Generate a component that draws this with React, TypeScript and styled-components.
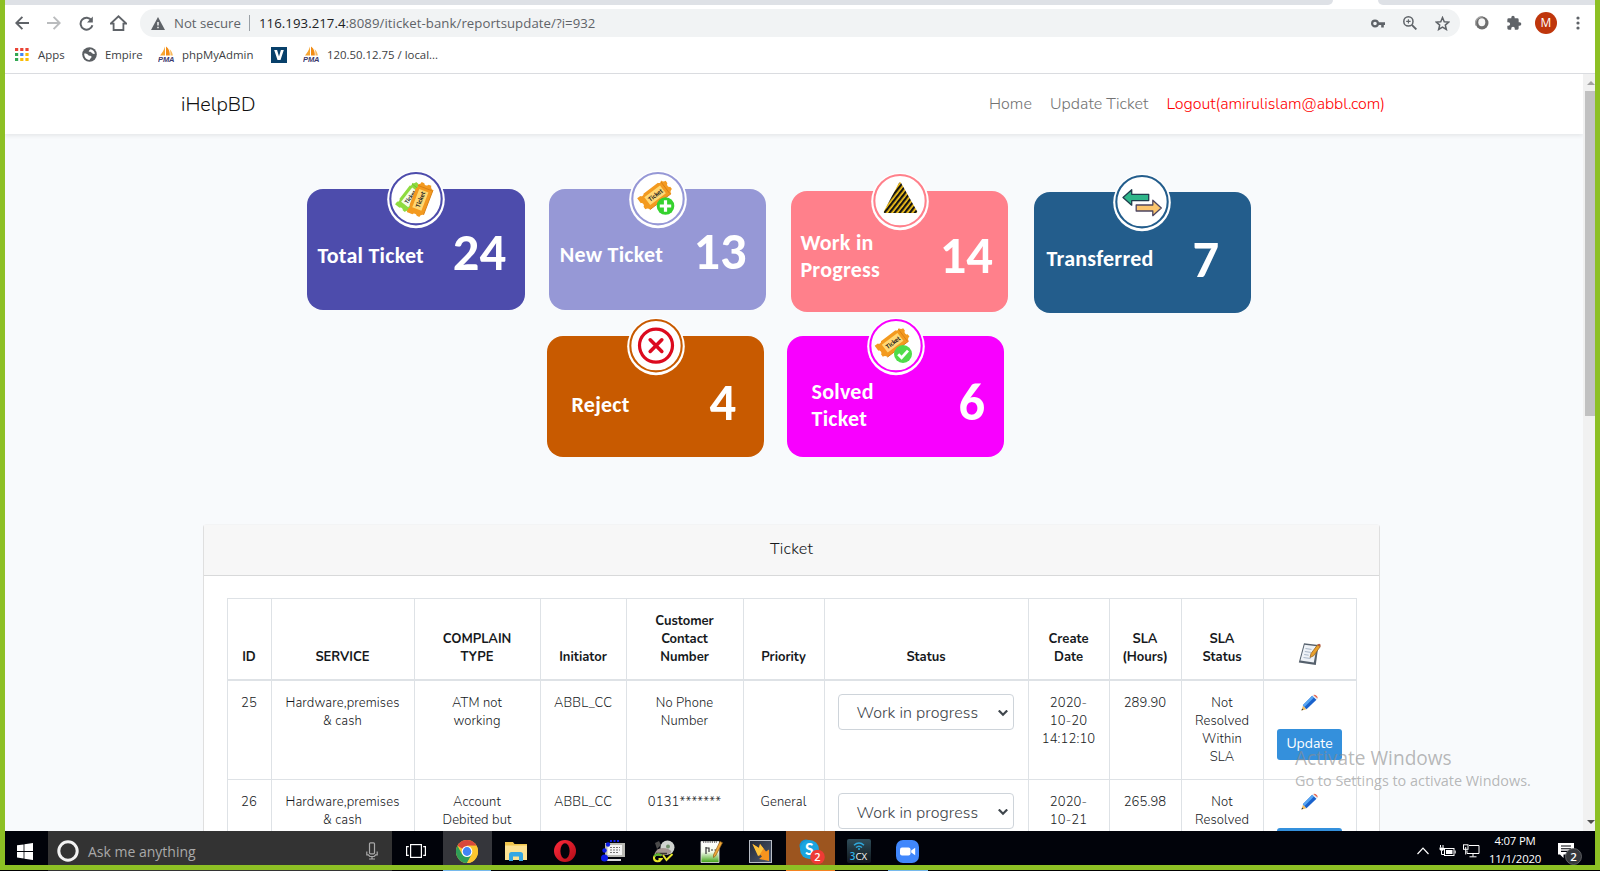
import React from 'react';
import styled, { createGlobalStyle } from 'styled-components';

const ui = '"Open Sans", "Noto Sans", sans-serif';
const web = 'Nunito, Lato, sans-serif';
const calibri = 'Carlito, Lato, sans-serif';

const GlobalStyle = createGlobalStyle`
  * { box-sizing: border-box; }
  body { margin: 0; background: #000; overflow: hidden; }
  svg { display: block; flex: none; }
`;

const Desktop = styled.div`
  position: relative;
  display: flex;
  flex-direction: column;
  width: 1600px;
  height: 871px;
  overflow: hidden;
`;
const Frame = styled.div`
  display: flex;
  flex-direction: column;
  height: 870px;
  border: solid #8dc024;
  border-width: 0 5px 5px;
  background: #fff;
`;

/* Browser chrome */
const TabStrip = styled.div`
  display: flex;
  justify-content: space-between;
  height: 5px;
  flex: none;
`;
const InactiveTab = styled.div<{ $width: number; $side: 'left' | 'right' }>`
  width: ${p => p.$width}px;
  background: #dee1e6;
  border-radius: ${p => (p.$side === 'left' ? '0 0 6px 0' : '0 0 0 6px')};
`;
const Toolbar = styled.div`
  display: flex;
  align-items: center;
  height: 36px;
  flex: none;
  padding-left: 1px;
`;
const IconSlot = styled.div`
  display: flex;
  align-items: center;
  justify-content: center;
  width: 32px;
  height: 28px;
  flex: none;
`;
const AddressBar = styled.div`
  display: flex;
  align-items: center;
  width: 1320px;
  height: 28px;
  margin: 0 6px;
  padding: 0 2px 0 11px;
  border-radius: 14px;
  background: #f1f3f4;
  font: 13.2px/28px ${ui};
  color: #5f6368;
`;
const Security = styled.span`
  width: 75px;
  margin-left: 9px;
`;
const Divider = styled.span`
  width: 1px;
  height: 16px;
  margin-right: 9px;
  background: #9aa0a6;
`;
const Url = styled.span`
  flex: 1;
  letter-spacing: 0.06px;
  b { font-weight: 400; color: #202124; }
`;
const Avatar = styled.div`
  width: 22px;
  height: 22px;
  border-radius: 50%;
  background: #bf360c;
  color: #fff;
  font: 12px/22px ${ui};
  text-align: center;
`;
const Bookmarks = styled.div`
  display: flex;
  align-items: center;
  height: 33px;
  flex: none;
  padding: 0 0 5px 10px;
  border-bottom: 1px solid #dadce0;
`;
const Bookmark = styled.div<{ $width: number }>`
  display: flex;
  align-items: center;
  width: ${p => p.$width}px;
  font: 11.4px/28px ${ui};
  color: #3c4043;
  white-space: nowrap;
`;
const Favicon = styled.span<{ $wide?: boolean }>`
  width: ${p => (p.$wide ? 24 : 23)}px;
  flex: none;
`;

/* Web page */
const Viewport = styled.div`
  display: flex;
  flex: 1;
  min-height: 0;
`;
const Page = styled.main`
  width: 1578px;
  overflow: hidden;
  background: #f8fafc;
  font-family: ${web};
  font-weight: 300;
  color: #16191c;
`;
const Scrollbar = styled.div`
  display: flex;
  flex-direction: column;
  align-items: flex-end;
  justify-content: space-between;
  width: 12px;
  padding: 7px 0 7px;
  background: #f1f1f1;
`;
const Thumb = styled.div`
  width: 10px;
  height: 325px;
  margin: 6px 0 auto;
  background: #c1c1c1;
`;
const Navbar = styled.nav`
  display: flex;
  align-items: center;
  height: 60px;
  padding: 0 198px 0 176px;
  background: #fff;
  box-shadow: 0 2px 4px rgba(0, 0, 0, 0.075);
`;
const Brand = styled.span`
  margin-right: auto;
  font-size: 19.8px;
  color: #111;
`;
const NavLink = styled.a<{ $danger?: boolean }>`
  margin-left: 18px;
  font-size: 16px;
  letter-spacing: ${p => (p.$danger ? -0.06 : 0.04)}px;
  color: ${p => (p.$danger ? '#ff0000' : '#737373')};
`;

/* Summary tiles */
const TileRow = styled.section<{ $top: number; $left: number; $gap: number }>`
  display: flex;
  align-items: flex-start;
  gap: ${p => p.$gap}px;
  margin-top: ${p => p.$top}px;
  padding-left: ${p => p.$left}px;
`;
const TileBox = styled.article<{ $color: string; $drop: number; $width: number }>`
  position: relative;
  display: flex;
  align-items: flex-start;
  justify-content: space-between;
  width: ${p => p.$width}px;
  height: 121px;
  margin: ${p => p.$drop}px ${p => 217 - p.$width}px 0 0;
  border-radius: 16px;
  background: ${p => p.$color};
  color: #fff;
  font-family: ${calibri};
  font-weight: 700;
`;
const TileLabel = styled.div<{ $top: number; $left: number }>`
  margin: ${p => p.$top}px 0 0 ${p => p.$left}px;
  font-size: 22px;
  line-height: 26.7px;
  letter-spacing: 0.25px;
  white-space: pre-line;
`;
const TileNumber = styled.div<{ $top: number; $right: number }>`
  margin: ${p => p.$top}px ${p => p.$right}px 0 0;
  font-size: 52.5px;
  line-height: 52px;
`;
const TileBadge = styled.div`
  position: absolute;
  left: 50%;
  top: -20px;
  transform: translateX(-50%);
`;

/* Ticket panel */
const Panel = styled.section`
  width: 1177px;
  margin: 67px 0 0 198px;
  border: 1px solid #dfdfdf;
  border-top-color: #f3f4f5;
  border-radius: 4px;
  background: #fff;
`;
const PanelTitle = styled.h2`
  height: 51px;
  margin: 0;
  border-bottom: 1px solid #d8d9da;
  background: #f7f7f7;
  font-size: 16px;
  font-weight: 300;
  letter-spacing: 0.2px;
  line-height: 48px;
  text-align: center;
`;
const Table = styled.table`
  width: 1130px;
  margin: 22px 0 0 23px;
  border-collapse: collapse;
  table-layout: fixed;
  font-size: 13px;
  line-height: 18px;
  text-align: center;
`;
const HeadCell = styled.th`
  height: 81px;
  padding: 0 9px 13px 8px;
  vertical-align: bottom;
  border: 1px solid #dee2e6;
  border-bottom-width: 2px;
  font-weight: 700;
  white-space: pre-line;
`;
const Cell = styled.td`
  height: 100px;
  padding: 13px 1px 0 0;
  vertical-align: top;
  border: 1px solid #dee2e6;
  letter-spacing: 0.12px;
  white-space: pre-line;
`;
const StatusSelect = styled.div`
  display: flex;
  align-items: center;
  justify-content: space-between;
  width: 176px;
  height: 36px;
  margin: 0 auto;
  padding: 3px 5px 0 17.5px;
  border: 1px solid #ced4da;
  border-radius: 4px;
  font-size: 16px;
  letter-spacing: 0.05px;
  color: #3c4349;
`;
const Actions = styled.div`
  display: flex;
  flex-direction: column;
  align-items: center;
  gap: 18px;
`;
const UpdateButton = styled.button`
  width: 65px;
  height: 31px;
  padding: 0 0 2px;
  border: 0;
  border-radius: 3px;
  background: #3490dc;
  color: #fff;
  font: 14px ${web};
`;
const HeadIcon = styled.span`
  display: flex;
  justify-content: center;
`;

/* Windows shell */
const Watermark = styled.div`
  position: absolute;
  left: 1295px;
  top: 745px;
  color: rgba(140, 140, 140, 0.62);
  font: 14.4px/17px ${ui};
  white-space: nowrap;
  strong { display: block; font-size: 19.1px; line-height: 27px; font-weight: 400; }
`;
const Taskbar = styled.footer`
  display: flex;
  height: 34px;
  flex: none;
  overflow: hidden;
  background: #01030a;
`;
const TaskSlot = styled.div<{ $width?: number; $bg?: string; $shift?: number; $drop?: number }>`
  display: flex;
  align-items: center;
  justify-content: center;
  width: ${p => p.$width ?? 49}px;
  height: 40px;
  flex: none;
  padding: ${p => p.$drop ?? 0}px ${p => p.$shift ?? 0}px 0 0;
  background: ${p => p.$bg ?? 'transparent'};
`;
const SearchBox = styled.div`
  display: flex;
  align-items: center;
  width: 344px;
  height: 40px;
  padding: 0 14px 0 9px;
  background: #333;
  font: 14px/40px ${ui};
  color: #a9a9a9;
  span { flex: 1; margin: 1px 0 0 9px; }
`;
const Tray = styled.div`
  display: flex;
  margin-left: auto;
`;
const Clock = styled.div`
  width: 64px;
  padding-top: 1px;
  font: 11.4px/18px ${ui};
  letter-spacing: -0.2px;
  color: #fff;
  text-align: center;
`;
const Underline = styled.div`
  display: flex;
  height: 1px;
  padding-left: 48px;
  background: #000;
`;
const Segment = styled.span<{ $width: number; $color: string }>`
  width: ${p => p.$width}px;
  background: ${p => p.$color};
`;

const grey = '#5f6368';

const Arrow = ({ flip, color }: { flip?: boolean; color: string }) => (
  <svg width="14" height="14" viewBox="0 0 14 14" fill="none" stroke={color} strokeWidth="1.9" transform={flip ? 'scale(-1 1)' : undefined}>
    <path d="M14 7H1.5M7.4 .8 1.3 7l6.1 6.2" />
  </svg>
);
const Reload = () => (
  <svg width="15" height="15" viewBox="0 0 15 15">
    <path d="M12.600 4.400A6 6 0 1 0 13.400 9.200" fill="none" stroke={grey} strokeWidth="2" />
    <path d="M13.800 .6v6H8z" fill={grey} />
  </svg>
);
const HomeIcon = () => (
  <svg width="17" height="16" viewBox="0 0 17 16" fill="none" stroke={grey} strokeWidth="1.8">
    <path d="M.8 8.600H3.600V15h9.800V8.600h2.800L8.500 1.300z" />
  </svg>
);
const Warning = () => (
  <svg width="14" height="13" viewBox="0 0 14 13">
    <path d="M7 0l7 13H0z" fill={grey} />
    <path d="M6.300 5h1.400v3.600H6.300zM6.300 9.700h1.400v1.500H6.300z" fill="#fff" />
  </svg>
);
const KeyIcon = () => (
  <svg width="14" height="9" viewBox="0 0 14 9">
    <circle cx="4" cy="4.500" r="2.900" fill="none" stroke={grey} strokeWidth="2.200" />
    <path d="M6.500 3.200H14v2.700h-1.200v2.500h-2.600V5.900H6.500z" fill={grey} />
  </svg>
);
const ZoomIcon = () => (
  <svg width="14" height="14" viewBox="0 0 14 14" fill="none" stroke={grey}>
    <circle cx="5.400" cy="5.400" r="4.600" strokeWidth="1.500" />
    <path d="M8.800 8.800l4.600 4.600" strokeWidth="1.900" />
    <path d="M3.200 5.400h4.400M5.400 3.200v4.400" strokeWidth="1.100" />
  </svg>
);
const Star = () => (
  <svg width="15" height="15" viewBox="0 0 24 24" fill="none" stroke={grey} strokeWidth="2.400">
    <path d="M12 2.500l2.800 6.700 7.200.6-5.500 4.700 1.700 7.100-6.200-3.800-6.200 3.800 1.700-7.100L2 9.800l7.200-.6z" />
  </svg>
);
const Ball = () => (
  <svg width="14" height="14" viewBox="0 0 14 14">
    <circle cx="7" cy="7" r="6.500" fill="#6d6d6d" />
    <path d="M1 9.500A6.400 6.400 0 0 1 8 .8" stroke="#a5a5a5" strokeWidth="1.400" fill="none" />
    <ellipse cx="6.800" cy="6.200" rx="3.500" ry="4" fill="#f6f6f6" />
  </svg>
);
const Puzzle = () => (
  <svg width="16" height="16" viewBox="0 0 24 24" fill={grey}>
    <path d="M20.500 11H19V7a2 2 0 0 0-2-2h-4V3.500a2.500 2.500 0 0 0-5 0V5H4a2 2 0 0 0-2 2v3.800h1.500a2.700 2.700 0 0 1 0 5.400H2V20a2 2 0 0 0 2 2h3.800v-1.500a2.700 2.700 0 0 1 5.400 0V22H17a2 2 0 0 0 2-2v-4h1.500a2.500 2.500 0 0 0 0-5z" />
  </svg>
);
const Dots = () => (
  <svg width="4" height="14" viewBox="0 0 4 14" fill={grey}>
    <circle cx="2" cy="2" r="1.600" /><circle cx="2" cy="7" r="1.600" /><circle cx="2" cy="12" r="1.600" />
  </svg>
);
const AppsGrid = () => {
  const colors = ['#ea4335', '#ea4335', '#ea4335', '#34a853', '#4285f4', '#fbbc05', '#34a853', '#fbbc05', '#fbbc05'];
  return (
    <svg width="14" height="13" viewBox="0 0 14 13">
      {colors.map((c, i) => <rect key={i} x={(i % 3) * 5.2} y={Math.floor(i / 3) * 5} width="3.200" height="3" fill={c} />)}
    </svg>
  );
};
const Globe = () => (
  <svg width="15" height="15" viewBox="0 0 15 15">
    <circle cx="7.500" cy="7.500" r="7.300" fill="#5b5f63" />
    <path d="M8.300 2.200c2.600.3 4.300 2.100 4.500 4.600-1.400.5-2.600-.2-3.400-1.200-.9-1.100-2.900.2-2.600-1.500.1-.8 1-1 1.500-1.900zM2.200 6.600c1.700-.2 3.400.5 4.400 1.800 1.200.3 2.500.1 3.100 1.300-.2 1.300-1.500 1.700-2.200 3.200-3.100.2-5.500-2.800-5.300-6.300z" fill="#fff" />
  </svg>
);
const Pma = () => (
  <svg width="17" height="17" viewBox="0 0 17 17">
    <path d="M7 .5v9H2C4 7 6 4 7 .5z" fill="#f7a531" />
    <path d="M8 .5c3 2 4 5.500 3.800 9H8z" fill="#f28c14" />
    <path d="M11.500 3c2 1.700 3 4 3.400 6.500h-2.500c.1-2.500 0-4.500-.9-6.500z" fill="#f9b95c" />
    <text x="0" y="16.400" fontFamily="Liberation Sans, sans-serif" fontSize="7.500" fontWeight="700" fontStyle="italic" fill="#3c3a6e" textLength="16.500">PMA</text>
  </svg>
);
const VIcon = () => (
  <svg width="16" height="16" viewBox="0 0 16 16">
    <rect width="16" height="16" fill="#08406a" />
    <path d="M3.200 3h2.900L8 9.600 9.900 3h2.900L9.500 13h-3z" fill="#fff" />
  </svg>
);

const TicketShape = ({ green, size = 1 }: { green?: boolean; size?: number }) => (
  <g transform={`scale(${size})`}>
    <path d="M-17-8.500h4c.3 1.600 3.700 1.600 4 0H9.500c.3 1.600 3.700 1.600 4 0 .3 2 1.500 3 3.500 3.200v3c-2 .4-2 4.200 0 4.600v3c-2 .2-3.200 1.200-3.500 3.200h-27c-.3-2-1.500-3-3.500-3.200v-3c2-.4 2-4.200 0-4.600z" fill={green ? '#8edb3f' : '#f39a1f'} />
    <path d="M-13.500 8.500h27M12.500-7.500v15" fill="none" stroke={green ? '#6fbf2a' : '#d97f12'} strokeWidth=".9" />
    <rect x="-10.500" y="-5" width="20" height="10" fill={green ? '#f4fbe9' : '#ffd873'} />
    <text y="2.200" textAnchor="middle" fontFamily="Carlito, Lato, sans-serif" fontWeight="700" fontSize="6.800" fill="#222">Ticket</text>
  </g>
);

type Glyph = 'total' | 'new' | 'progress' | 'transfer' | 'reject' | 'solved';
const BadgeArt = ({ glyph, color }: { glyph: Glyph; color: string }) => (
  <svg width="60" height="62" viewBox="0 0 60 62">
    <circle cx="30" cy="30.500" r="28.800" fill="#fff" />
    <circle cx="30" cy="29.700" r="25.700" fill="#fff" stroke={color} strokeWidth="2.100" />
    {glyph === 'total' && (
      <>
        <g transform="translate(24.500 28) rotate(-52)"><TicketShape green size={0.9} /></g>
        <g transform="translate(34.500 30.500) rotate(-69)"><TicketShape size={0.98} /></g>
      </>
    )}
    {glyph === 'new' && (
      <>
        <g transform="translate(27.500 26) rotate(-37)"><TicketShape size={0.98} /></g>
        <circle cx="37.500" cy="37" r="8.800" fill="#35d22f" />
        <path d="M37.500 31.300v11.400M31.800 37h11.400" stroke="#fff" strokeWidth="3.200" />
      </>
    )}
    {glyph === 'solved' && (
      <>
        <g transform="translate(27 26.500) rotate(-37)"><TicketShape size={0.98} /></g>
        <circle cx="37" cy="38" r="9" fill="#4fdc4a" />
        <path d="M32.200 38.200l3.400 3.600 6.400-7.200" stroke="#fff" strokeWidth="2.800" fill="none" />
      </>
    )}
    {glyph === 'progress' && (
      <>
        <defs>
          <pattern id="hazard" width="4" height="4" patternUnits="userSpaceOnUse" patternTransform="rotate(38)">
            <rect width="4" height="4" fill="#fdc91a" />
            <rect width="2.300" height="4" fill="#141414" />
          </pattern>
        </defs>
        <path d="M30 12.500L15 40.800h31z" fill="url(#hazard)" stroke="url(#hazard)" strokeWidth="2.500" strokeLinejoin="round" />
      </>
    )}
    {glyph === 'transfer' && (
      <g strokeWidth="1.300" strokeLinejoin="round">
        <path d="M11 25.500l8.700-7.700v4.500h17v6.300h-17v4.600z" fill="#2fb68a" stroke="#1e3d4c" />
        <path d="M49.300 36l-8.500-7.800v4.800H24.200v6h16.600v4.700z" fill="#fbc56d" stroke="#4d4560" />
      </g>
    )}
    {glyph === 'reject' && (
      <g fill="none" stroke="#dc0a1e">
        <circle cx="30" cy="29.600" r="16.500" strokeWidth="3.200" />
        <path d="M24.200 23.800l11.600 11.600M35.800 23.800L24.200 35.400" strokeWidth="3.600" strokeLinecap="round" />
      </g>
    )}
  </svg>
);

const Notepad = () => (
  <svg width="23" height="24" viewBox="0 0 23 24">
    <path d="M6 1.200L20.500 3 17.800 23 .8 20.500z" fill="#55606c" />
    <path d="M6.600 2.800L18.800 4.300 15.800 20.600 2.400 18.600z" fill="#eef2f7" />
    <path d="M7.500 6.500l6 .9M6.800 9.500l6 .9M6.200 12.500l4.500.7M5.500 15.500l7 1" stroke="#a9b7c8" strokeWidth="1" />
    <path d="M12 15.500l1-4L19.500 2.800l2.800 1.800-6.600 9.200z" fill="#e9a02c" stroke="#8a5a1c" strokeWidth=".7" />
    <path d="M19.500 2.800l2.800 1.800 .4-1.800-1.600-1z" fill="#b04a33" />
  </svg>
);
const Pencil = () => (
  <svg width="17" height="17" viewBox="0 0 17 17">
    <path d="M.5 16.500L2 11.500l3.500 3.700z" fill="#f0bd62" />
    <path d="M.5 16.500l.6-2 1.300 1.300z" fill="#333" />
    <path d="M1.800 11.300L11.200 1.800l4.300 3.900L5.500 15.200z" fill="#1a62cc" />
    <path d="M1.800 11.300L11.200 1.800l1.800 1.600-9.500 9.500z" fill="#57a5f2" />
    <path d="M11.500 2l1-.9 4 3.500-1 1.100z" fill="#dfe5ea" />
    <path d="M12.500 1.100c1-1.300 5 1.800 4 3.500z" fill="#e8573c" />
  </svg>
);
const Chevron = () => (
  <svg width="10" height="7" viewBox="0 0 10 7" fill="none" stroke="#3f464c" strokeWidth="2.200">
    <path d="M.8 .5l4.200 4.200L9.200 .5" />
  </svg>
);
const Caret = ({ up }: { up?: boolean }) => (
  <svg width="8" height="4" viewBox="0 0 8 4">
    <path d={up ? 'M0 4l4-4 4 4z' : 'M0 0l4 4 4-4z'} fill={up ? '#a3a3a3' : '#505050'} />
  </svg>
);

const WindowsLogo = () => (
  <svg width="16" height="17" viewBox="0 0 16 17" fill="#fff">
    <path d="M0 2.300l6.600-.9v6.600H0zM7.400 1.300L16 0v8H7.400zM0 8.900h6.600v6.600L0 14.600zM7.400 8.900H16V17l-8.600-1.300z" />
  </svg>
);
const Cortana = () => (
  <svg width="22" height="22" viewBox="0 0 22 22">
    <circle cx="11" cy="11" r="9.200" fill="none" stroke="#f2f2f2" strokeWidth="3" />
  </svg>
);
const Mic = () => (
  <svg width="12" height="18" viewBox="0 0 12 18" fill="none" stroke="#a9a9a9" strokeWidth="1.200">
    <rect x="3.500" y=".8" width="5" height="11" rx="1" />
    <path d="M.8 9.500v3.300h1.500l1.500 1.700h4.400l1.500-1.700h1.500V9.500M6 14.500V17M3 17h6" />
  </svg>
);
const TaskView = () => (
  <svg width="20" height="14" viewBox="0 0 20 14" fill="none" stroke="#fff" strokeWidth="1.200">
    <rect x="4.600" y=".6" width="10.800" height="12.800" />
    <path d="M2.800 2.600H.6v8.800h2.200M17.200 2.600h2.200v8.800h-2.200" />
  </svg>
);
const Chrome = () => (
  <svg width="22" height="23" viewBox="0 0 24 24" preserveAspectRatio="none">
    <circle cx="12" cy="12" r="12" fill="#fbc62f" />
    <path d="M12 12L1.600 6A12 12 0 0 1 22.400 6H12z" fill="#d9483b" />
    <path d="M1.600 6A12 12 0 0 0 12 24l5.200-9L12 12 6.800 15z" fill="#2f9e57" />
    <path d="M22.400 6A12 12 0 0 1 12 24l5.200-9a6 6 0 0 0 0-6L12 6z" fill="#fbc62f" />
    <circle cx="12" cy="12" r="5.800" fill="#fff" />
    <circle cx="12" cy="12" r="4.600" fill="#4285f4" />
  </svg>
);
const Folder = () => (
  <svg width="22" height="19" viewBox="0 0 22 19">
    <path d="M0 0h8l1.500 2H22v16H0z" fill="#f0c54d" />
    <path d="M0 3.500h22V18H0z" fill="#fde293" />
    <path d="M4 19v-6.500Q4 10 6.500 10h9q2.500 0 2.500 2.500V19h-4v-4.500H8V19z" fill="#35a7e3" />
  </svg>
);
const Opera = () => (
  <svg width="22" height="22" viewBox="0 0 22 22">
    <defs><linearGradient id="op" x2="1" y2="1"><stop stopColor="#ff2a3c" /><stop offset="1" stopColor="#b00d16" /></linearGradient></defs>
    <circle cx="11" cy="11" r="11" fill="url(#op)" />
    <ellipse cx="11" cy="11" rx="4.600" ry="7.800" fill="#01030a" />
  </svg>
);
const Terminal = () => (
  <svg width="24" height="22" viewBox="0 0 24 22">
    <path d="M4 3h20V17H4z" fill="#b9b9b4" />
    <path d="M6.500 5h14.500v10H6.500z" fill="#f5f5f5" />
    <path d="M9 7.500h10M9 10h10M9 12.500h8" stroke="#777" strokeWidth="1" strokeDasharray="2 1" />
    <path d="M3 19h17v2H3z" fill="#d8d8d8" />
    <path d="M9 1h10" stroke="#0b1be8" strokeWidth="2" strokeDasharray="2 1.500" />
    <circle cx="7" cy="4.500" r="2.200" fill="#0b1be8" /><circle cx="3.500" cy="10.500" r="2.200" fill="#0b1be8" /><circle cx="3.500" cy="18" r="3.500" fill="#0b1be8" />
  </svg>
);
const DiscTool = () => (
  <svg width="23" height="23" viewBox="0 0 23 23">
    <circle cx="15.500" cy="7.500" r="7" fill="#cfd3cf" />
    <circle cx="16" cy="6.500" r="2" fill="#6f8f6a" />
    <path d="M3 3l4-2 2 4-4 4z" fill="#4b4b4b" />
    <path d="M2.500 14q2-6 8-6 7 0 9 4l-4 3z" fill="#a39691" />
    <path d="M4 13.500h11" stroke="#3a3432" strokeWidth="1.500" />
    <path d="M9.500 15.500c-4-2.500-8 0-7.500 3s5.500 4 7.500.5H6.500M11 15l3.500 5 6-6" fill="none" stroke="#e6e62a" strokeWidth="2" />
    <path d="M9.500 15.500c-3-2-6-.8-7 1" fill="none" stroke="#57b33a" strokeWidth="2" />
  </svg>
);
const NotepadPlus = () => (
  <svg width="24" height="23" viewBox="0 0 24 23">
    <defs><linearGradient id="np" x2="0" y2="1"><stop stopColor="#fff" /><stop offset=".5" stopColor="#f4fbec" /><stop offset="1" stopColor="#3fa312" /></linearGradient></defs>
    <path d="M1 1.500h18V22.500H1z" fill="url(#np)" stroke="#e4e8e0" strokeWidth=".8" />
    <path d="M3 2h14" stroke="#555" strokeWidth="1.300" strokeDasharray="1.200 1" />
    <path d="M6 7v7M6 8h3v4M11 10h2M14.500 10h1.500" stroke="#333" strokeWidth="1.200" fill="none" />
    <path d="M13.500 15l6.500-13.500 2.500 1.200-7 13.300-2 1.500z" fill="#f0a93a" stroke="#8c5b12" strokeWidth=".7" />
  </svg>
);
const Bolt = () => (
  <svg width="23" height="23" viewBox="0 0 23 23">
    <defs><linearGradient id="bz" x2="1" y2="1"><stop stopColor="#202734" /><stop offset="1" stopColor="#4e5a70" /></linearGradient></defs>
    <rect x=".5" y=".5" width="22" height="22" fill="url(#bz)" stroke="#b9bec6" />
    <path d="M3.500 4l6.500 4 1-4 6 7.500 3-2V21l-10-2 3-2.500-2-2-1 2z" fill="#f7941e" />
    <path d="M3.500 4l6.500 4 1-4 3.500 4.500-4 6.500-1.500 1z" fill="#fdc33c" />
  </svg>
);
const Skype = () => (
  <svg width="28" height="28" viewBox="0 0 28 28">
    <circle cx="9" cy="9" r="6.500" fill="#1594d2" /><circle cx="15.500" cy="16" r="6.500" fill="#1594d2" />
    <circle cx="12.500" cy="12.500" r="9.500" fill="#1aa5e0" />
    <text x="12.200" y="18.300" textAnchor="middle" fontFamily="Carlito, Lato, sans-serif" fontSize="18" fontWeight="700" fill="#fff">S</text>
    <circle cx="20.500" cy="20" r="7.300" fill="#ee3b35" />
    <text x="20.500" y="24" textAnchor="middle" fontFamily="Open Sans, sans-serif" fontSize="11" fontWeight="600" fill="#fff">2</text>
  </svg>
);
const ThreeCx = () => (
  <svg width="24" height="24" viewBox="0 0 24 24">
    <defs><linearGradient id="cx" x2="0" y2="1"><stop stopColor="#2f4d5a" /><stop offset="1" stopColor="#10171c" /></linearGradient></defs>
    <rect width="24" height="24" rx="2" fill="url(#cx)" />
    <path d="M7 6.200q5-4.500 10 0M9 8.500q3-2.600 6 0" fill="none" stroke="#2fa8dc" strokeWidth="1.500" />
    <circle cx="12" cy="10" r="1" fill="#2fa8dc" />
    <text x="2.800" y="20.500" fontFamily="Open Sans, sans-serif" fontSize="9.800" fill="#2fb4ea" fontWeight="600">3<tspan fill="#f4f4f4" fontWeight="400">CX</tspan></text>
  </svg>
);
const ZoomApp = () => (
  <svg width="23" height="23" viewBox="0 0 23 23">
    <rect width="23" height="23" rx="7" fill="#4087fc" />
    <rect x="4" y="7.500" width="10.500" height="8" rx="2" fill="#fff" />
    <path d="M15.200 10.500l4-2.700v7.400l-4-2.700z" fill="#fff" />
  </svg>
);
const TrayChevron = () => (
  <svg width="12" height="8" viewBox="0 0 12 8" fill="none" stroke="#fff" strokeWidth="1.200"><path d="M.5 7L6 1.200 11.500 7" /></svg>
);
const Battery = () => (
  <svg width="17" height="12" viewBox="0 0 17 12" fill="none" stroke="#fff">
    <rect x="5.500" y="3.500" width="9.500" height="7" /><rect x="7" y="5" width="6.500" height="4" fill="#fff" stroke="none" />
    <path d="M16.200 5.500v3M2.500 5.500V9.500H5M1.500 0v2.500M4 0v2.500" /><path d="M.5 2.500h4.500v2L3.800 5.800h-2L.5 4.500z" fill="#fff" stroke="none" />
  </svg>
);
const Network = () => (
  <svg width="17" height="14" viewBox="0 0 17 14" fill="none" stroke="#fff">
    <path d="M6 1.500h10v8H4V6.500M10 9.500v3M6.500 12.800h7" /><rect x=".5" y=".8" width="4.500" height="4.500" /><path d="M2.700 3v7.500" />
  </svg>
);
const Notifications = () => (
  <svg width="27" height="24" viewBox="0 0 27 24">
    <path d="M0 1h16v11.500H5.500v3.500L2 12.500H0z" fill="#fff" />
    <path d="M3 4h10M3 6.700h10M3 9.400h7" stroke="#01030a" strokeWidth="1.100" />
    <circle cx="15.500" cy="14.500" r="8" fill="#35373b" stroke="#6b6d71" strokeWidth=".8" />
    <text x="15.500" y="18.700" textAnchor="middle" fontFamily="Open Sans, sans-serif" fontSize="11.500" fontWeight="600" fill="#fff">2</text>
  </svg>
);

type TileProps = {
  label: string; value: number; color: string; glyph: Glyph; drop?: number; width?: number;
  labelAt: [number, number]; valueAt: [number, number];
};
const Tile = ({ label, value, color, glyph, drop = 0, width = 217, labelAt, valueAt }: TileProps) => (
  <TileBox $color={color} $drop={drop} $width={width}>
    <TileBadge><BadgeArt glyph={glyph} color={color} /></TileBadge>
    <TileLabel $top={labelAt[0]} $left={labelAt[1]}>{label}</TileLabel>
    <TileNumber $top={valueAt[0]} $right={valueAt[1]}>{value}</TileNumber>
  </TileBox>
);

const columns: [string, number][] = [
  ['ID', 44], ['SERVICE', 143], ['COMPLAIN\nTYPE', 126], ['Initiator', 86], ['Customer\nContact\nNumber', 117],
  ['Priority', 81], ['Status', 204], ['Create\nDate', 81], ['SLA\n(Hours)', 72], ['SLA\nStatus', 82],
];
const tickets = [
  { id: 25, service: 'Hardware,premises\n& cash', type: 'ATM not\nworking', by: 'ABBL_CC', phone: 'No Phone\nNumber', priority: '', created: '2020-\n10-20\n14:12:10', sla: '289.90', slaStatus: 'Not\nResolved\nWithin\nSLA' },
  { id: 26, service: 'Hardware,premises\n& cash', type: 'Account\nDebited but', by: 'ABBL_CC', phone: '0131*******', priority: 'General', created: '2020-\n10-21', sla: '265.98', slaStatus: 'Not\nResolved' },
];

export default function App() {
  return (
    <Desktop>
      <GlobalStyle />
      <Frame>
        <TabStrip>
          <InactiveTab $width={1328} $side="left" />
          <InactiveTab $width={217} $side="right" />
        </TabStrip>
        <Toolbar>
          <IconSlot><Arrow color={grey} /></IconSlot>
          <IconSlot><Arrow flip color="#babcbe" /></IconSlot>
          <IconSlot><Reload /></IconSlot>
          <IconSlot><HomeIcon /></IconSlot>
          <AddressBar>
            <Warning />
            <Security>Not secure</Security>
            <Divider />
            <Url><b>116.193.217.4</b>:8089/iticket-bank/reportsupdate/?i=932</Url>
            <IconSlot><KeyIcon /></IconSlot>
            <IconSlot><ZoomIcon /></IconSlot>
            <IconSlot><Star /></IconSlot>
          </AddressBar>
          <IconSlot><Ball /></IconSlot>
          <IconSlot><Puzzle /></IconSlot>
          <IconSlot><Avatar>M</Avatar></IconSlot>
          <IconSlot><Dots /></IconSlot>
        </Toolbar>
        <Bookmarks>
          <Bookmark $width={67}><Favicon><AppsGrid /></Favicon>Apps</Bookmark>
          <Bookmark $width={76}><Favicon><Globe /></Favicon>Empire</Bookmark>
          <Bookmark $width={113}><Favicon $wide><Pma /></Favicon>phpMyAdmin</Bookmark>
          <Bookmark $width={32}><Favicon><VIcon /></Favicon></Bookmark>
          <Bookmark $width={160}><Favicon $wide><Pma /></Favicon>120.50.12.75 / local...</Bookmark>
        </Bookmarks>

        <Viewport>
          <Page>
            <Navbar>
              <Brand>iHelpBD</Brand>
              <NavLink>Home</NavLink>
              <NavLink>Update Ticket</NavLink>
              <NavLink $danger>Logout(amirulislam@abbl.com)</NavLink>
            </Navbar>

            <TileRow $top={55} $left={302} $gap={25.2}>
              <Tile label="Total Ticket" value={24} color="#4d4cac" glyph="total" width={218} labelAt={[54, 10.5]} valueAt={[36.5, 19]} />
              <Tile label="New Ticket" value={13} color="#9698d6" glyph="new" labelAt={[53, 10.5]} valueAt={[35.5, 19.5]} />
              <Tile label={'Work in\nProgress'} value={14} color="#ff808b" glyph="progress" drop={2} labelAt={[39, 9]} valueAt={[38, 15.5]} />
              <Tile label="Transferred" value={7} color="#235d8c" glyph="transfer" drop={3} labelAt={[54, 13]} valueAt={[40.5, 31.5]} />
            </TileRow>
            <TileRow $top={23} $left={542} $gap={23}>
              <Tile label="Reject" value={4} color="#c85a00" glyph="reject" labelAt={[56, 24.5]} valueAt={[39.5, 28]} />
              <Tile label={'Solved\nTicket'} value={6} color="#f800ff" glyph="solved" labelAt={[43, 24.5]} valueAt={[40, 19]} />
            </TileRow>

            <Panel>
              <PanelTitle>Ticket</PanelTitle>
              <Table>
                <colgroup>
                  {columns.map(([name, w]) => <col key={name} width={w} />)}
                  <col width={93} />
                </colgroup>
                <thead>
                  <tr>
                    {columns.map(([name]) => <HeadCell key={name}>{name}</HeadCell>)}
                    <HeadCell><HeadIcon><Notepad /></HeadIcon></HeadCell>
                  </tr>
                </thead>
                <tbody>
                  {tickets.map(t => (
                    <tr key={t.id}>
                      <Cell>{t.id}</Cell>
                      <Cell>{t.service}</Cell>
                      <Cell>{t.type}</Cell>
                      <Cell>{t.by}</Cell>
                      <Cell>{t.phone}</Cell>
                      <Cell>{t.priority}</Cell>
                      <Cell><StatusSelect>Work in progress<Chevron /></StatusSelect></Cell>
                      <Cell>{t.created}</Cell>
                      <Cell>{t.sla}</Cell>
                      <Cell>{t.slaStatus}</Cell>
                      <Cell><Actions><Pencil /><UpdateButton>{t.id === 25 ? 'Update' : ''}</UpdateButton></Actions></Cell>
                    </tr>
                  ))}
                </tbody>
              </Table>
            </Panel>
          </Page>
          <Scrollbar><Caret up /><Thumb /><Caret /></Scrollbar>
        </Viewport>

        <Taskbar>
          <TaskSlot $width={43} $shift={4}><WindowsLogo /></TaskSlot>
          <SearchBox><Cortana /><span>Ask me anything</span><Mic /></SearchBox>
          <TaskSlot $width={51} $shift={3}><TaskView /></TaskSlot>
          <TaskSlot $bg="#35363b" $shift={1}><Chrome /></TaskSlot>
          <TaskSlot $shift={2}><Folder /></TaskSlot>
          <TaskSlot $shift={2}><Opera /></TaskSlot>
          <TaskSlot $shift={3}><Terminal /></TaskSlot>
          <TaskSlot $shift={1}><DiscTool /></TaskSlot>
          <TaskSlot $shift={1}><NotepadPlus /></TaskSlot>
          <TaskSlot $shift={2}><Bolt /></TaskSlot>
          <TaskSlot $bg="#9c551f"><Skype /></TaskSlot>
          <TaskSlot $shift={1}><ThreeCx /></TaskSlot>
          <TaskSlot $shift={2}><ZoomApp /></TaskSlot>
          <Tray>
            <TaskSlot $width={24}><TrayChevron /></TaskSlot>
            <TaskSlot $width={24}><Battery /></TaskSlot>
            <TaskSlot $width={24}><Network /></TaskSlot>
            <Clock>4:07 PM<br />11/1/2020</Clock>
            <TaskSlot $width={48} $drop={6}><Notifications /></TaskSlot>
          </Tray>
        </Taskbar>
      </Frame>
      <Underline>
        <Segment $width={344} $color="#333" />
        <Segment $width={51} $color="#000" />
        <Segment $width={48} $color="#76b9ed" />
        <Segment $width={295} $color="#000" />
        <Segment $width={49} $color="#f58220" />
        <Segment $width={53} $color="#000" />
        <Segment $width={40} $color="#76b9ed" />
      </Underline>
      <Watermark><strong>Activate Windows</strong>Go to Settings to activate Windows.</Watermark>
    </Desktop>
  );
}
